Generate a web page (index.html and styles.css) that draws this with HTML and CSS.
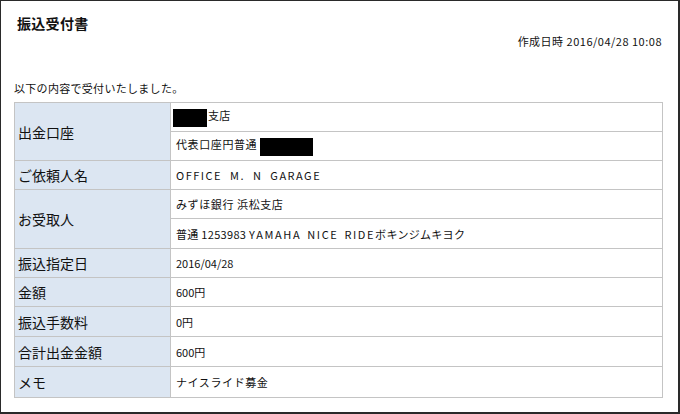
FILE: index.html
```html
<!DOCTYPE html>
<html lang="ja">
<head>
<meta charset="utf-8">
<link rel="stylesheet" href="styles.css">
</head>
<body>
<div class="page">
  <h1 class="title">振込受付書</h1>
  <p class="created">作成日時 2016/04/28 10:08</p>
  <p class="intro">以下の内容で受付いたしました。</p>
  <table class="detail">
    <tr class="r29">
      <th rowspan="2">出金口座</th>
      <td><span class="redact r1"></span>支店</td>
    </tr>
    <tr class="r29">
      <td class="kana">代表口座円普通<span class="redact r2"></span></td>
    </tr>
    <tr class="r29">
      <th>ご依頼人名</th>
      <td class="office">OFFICE M. N GARAGE</td>
    </tr>
    <tr class="r29">
      <th rowspan="2">お受取人</th>
      <td class="kana">みずほ銀行 浜松支店</td>
    </tr>
    <tr class="r30">
      <td>普通 1253983 <span class="wide">YAMAHA NICE RIDE</span>ボキンジムキヨク</td>
    </tr>
    <tr class="r29">
      <th>振込指定日</th>
      <td class="num">2016/04/28</td>
    </tr>
    <tr class="r29">
      <th>金額</th>
      <td class="num">600円</td>
    </tr>
    <tr class="r30">
      <th>振込手数料</th>
      <td class="num">0円</td>
    </tr>
    <tr class="r30">
      <th>合計出金金額</th>
      <td class="num">600円</td>
    </tr>
    <tr class="r31">
      <th>メモ</th>
      <td class="kana">ナイスライド募金</td>
    </tr>
  </table>
</div>
</body>
</html>
```

FILE: styles.css
```css
html, body {
  margin: 0;
  padding: 0;
  background: #ffffff;
}
body {
  font-family: "Noto Sans CJK JP", "Noto Sans", sans-serif;
  color: #111;
}
.page {
  box-sizing: border-box;
  width: 680px;
  height: 414px;
  border: 1px solid #2a2a2a;
  border-bottom-width: 2px;
  border-right-width: 2px;
  padding: 12px 16px 0 13px;
}
.title {
  margin: 0 0 0 3px;
  font-size: 14px;
  font-weight: bold;
  line-height: 20px;
  letter-spacing: 0.3px;
}
.created {
  margin: 0;
  text-align: right;
  font-size: 11px;
  line-height: 16px;
  letter-spacing: 0.5px;
}
.intro {
  margin: 31px 0 0 0;
  font-size: 11px;
  line-height: 16px;
  letter-spacing: 0.3px;
}
.detail {
  margin-top: 6px;
  width: 649px;
  border-collapse: collapse;
  border: 1px solid #c4c4c4;
}
.detail th,
.detail td {
  border: 1px solid #c4c4c4;
  padding: 0;
  vertical-align: middle;
}
.detail th {
  width: 152px;
  background: #dce6f2;
  text-align: left;
  font-weight: normal;
  font-size: 14px;
  padding-left: 3px;
  color: #111;
}
.detail td {
  font-size: 11px;
  padding-left: 5px;
  letter-spacing: 0.3px;
}
.detail td.kana {
  letter-spacing: 0.6px;
}
.detail td.num {
  letter-spacing: 0;
}
.detail td.office {
  letter-spacing: 1.5px;
  word-spacing: 4px;
}
.r29 { height: 29px; }
.r30 { height: 30px; }
.r31 { height: 31px; }
.wide {
  letter-spacing: 1.6px;
  word-spacing: 2px;
}
.redact {
  display: inline-block;
  background: #000;
  vertical-align: middle;
}
.r1 {
  width: 34px;
  height: 18px;
  margin-left: -3px;
  margin-right: 1px;
}
.r2 {
  width: 53px;
  height: 18px;
  margin-left: 3px;
}
```
